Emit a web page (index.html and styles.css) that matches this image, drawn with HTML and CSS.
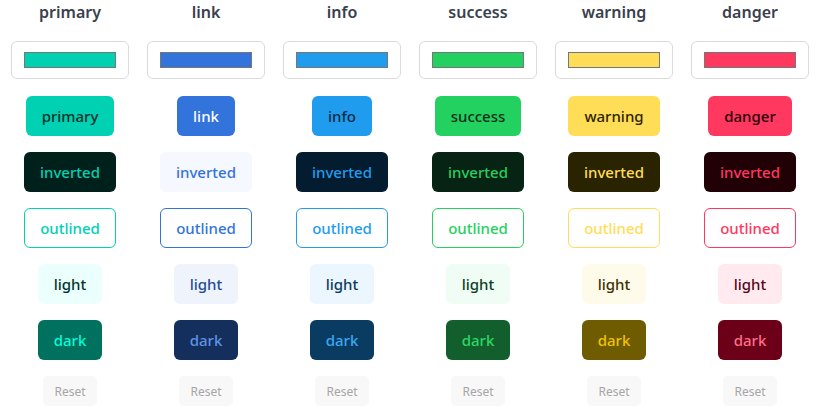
FILE: index.html
```html
<!DOCTYPE html>
<html lang="en">
<head>
	<meta charset="UTF-8">
	<title>Colour variants</title>
<link rel="stylesheet" href="styles.css">
</head>
<body>
	<div class="board">
		<div class="col is-primary">
			<strong class="name">primary</strong>
			<input class="picker" type="color" value="#00d1b2">
			<a class="btn solid">primary</a>
			<a class="btn inverted">inverted</a>
			<a class="btn outlined">outlined</a>
			<a class="btn light">light</a>
			<a class="btn dark">dark</a>
			<a class="reset">Reset</a>
		</div>
		<div class="col is-link">
			<strong class="name">link</strong>
			<input class="picker" type="color" value="#3273dc">
			<a class="btn solid">link</a>
			<a class="btn inverted">inverted</a>
			<a class="btn outlined">outlined</a>
			<a class="btn light">light</a>
			<a class="btn dark">dark</a>
			<a class="reset">Reset</a>
		</div>
		<div class="col is-info">
			<strong class="name">info</strong>
			<input class="picker" type="color" value="#209cee">
			<a class="btn solid">info</a>
			<a class="btn inverted">inverted</a>
			<a class="btn outlined">outlined</a>
			<a class="btn light">light</a>
			<a class="btn dark">dark</a>
			<a class="reset">Reset</a>
		</div>
		<div class="col is-success">
			<strong class="name">success</strong>
			<input class="picker" type="color" value="#23d160">
			<a class="btn solid">success</a>
			<a class="btn inverted">inverted</a>
			<a class="btn outlined">outlined</a>
			<a class="btn light">light</a>
			<a class="btn dark">dark</a>
			<a class="reset">Reset</a>
		</div>
		<div class="col is-warning">
			<strong class="name">warning</strong>
			<input class="picker" type="color" value="#ffdd57">
			<a class="btn solid">warning</a>
			<a class="btn inverted">inverted</a>
			<a class="btn outlined">outlined</a>
			<a class="btn light">light</a>
			<a class="btn dark">dark</a>
			<a class="reset">Reset</a>
		</div>
		<div class="col is-danger">
			<strong class="name">danger</strong>
			<input class="picker" type="color" value="#ff3860">
			<a class="btn solid">danger</a>
			<a class="btn inverted">inverted</a>
			<a class="btn outlined">outlined</a>
			<a class="btn light">light</a>
			<a class="btn dark">dark</a>
			<a class="reset">Reset</a>
		</div>
	</div>
</body>
</html>
```

FILE: styles.css
```css
*{
	margin: 0;
	padding: 0;
	box-sizing: border-box;
}
a{text-decoration: none;}
body{
	background: #fff;
	font-family: "Noto Sans", "Open Sans", sans-serif;
	color: #4a4a4a;
}
.board{
	display: grid;
	grid-template-columns: repeat(6, 136px);
	padding-left: 2px;
}
.col{
	display: flex;
	flex-direction: column;
	align-items: center;
	gap: 16px;
}
.name{
	height: 25px;
	line-height: 25px;
	font-size: 16px;
	font-weight: 600;
	color: #3b404d;
}
.picker{
	width: 118px;
	height: 38px;
	margin-bottom: 1px;
	padding: 10px 12px;
	border: 1px solid #dbdbdb;
	border-radius: 6px;
	background: #fff;
	cursor: pointer;
}
.picker::-webkit-color-swatch-wrapper{padding: 0;}
.picker::-webkit-color-swatch{
	border: 1px solid #767676;
	border-radius: 0;
}
.btn{
	display: flex;
	align-items: center;
	height: 40px;
	padding: 0 15px;
	border: 1px solid transparent;
	border-radius: 6px;
	font-size: 15px;
	font-weight: 500;
	line-height: 1.5;
	cursor: pointer;
	white-space: nowrap;
}
.btn.solid{
	background: var(--main);
	color: var(--main-text);
}
.btn.inverted{
	background: var(--inv-bg);
	color: var(--main);
}
.btn.outlined{
	background: #fff;
	border-color: var(--main);
	color: var(--main);
}
.btn.light{
	background: var(--light-bg);
	color: var(--light-text);
}
.btn.dark{
	background: var(--dark-bg);
	color: var(--dark-text);
}
.reset{
	display: flex;
	align-items: center;
	height: 30px;
	padding: 0 11px;
	border-radius: 5px;
	background: #f8f8f8;
	color: #a6a6a6;
	font-size: 12px;
	cursor: pointer;
}

.is-primary{
	--main: #00d1b2;
	--main-text: #0a2e28;
	--inv-bg: #00201b;
	--light-bg: #ebfffc;
	--light-text: #00362e;
	--dark-bg: #00705f;
	--dark-text: #00ffd9;
}
.is-link{
	--main: #3273dc;
	--main-text: #fff;
	--inv-bg: #f5f8fe;
	--light-bg: #eef3fc;
	--light-text: #224d94;
	--dark-bg: #142f5c;
	--dark-text: #5f93e7;
}
.is-info{
	--main: #209cee;
	--main-text: #0b2a40;
	--inv-bg: #041c2f;
	--light-bg: #ebf6fe;
	--light-text: #0d3b5c;
	--dark-bg: #0a3c62;
	--dark-text: #3aa8f2;
}
.is-success{
	--main: #23d160;
	--main-text: #0d2e18;
	--inv-bg: #072313;
	--light-bg: #effdf4;
	--light-text: #0e3d1e;
	--dark-bg: #125f2d;
	--dark-text: #2bd966;
}
.is-warning{
	--main: #ffdd57;
	--main-text: #2b2400;
	--inv-bg: #2a2300;
	--light-bg: #fffbeb;
	--light-text: #3b3100;
	--dark-bg: #6f5b00;
	--dark-text: #f0c400;
}
.is-danger{
	--main: #ff3860;
	--main-text: #2a0008;
	--inv-bg: #210006;
	--light-bg: #ffebef;
	--light-text: #5a0617;
	--dark-bg: #6d0019;
	--dark-text: #ff6d8a;
}
```
